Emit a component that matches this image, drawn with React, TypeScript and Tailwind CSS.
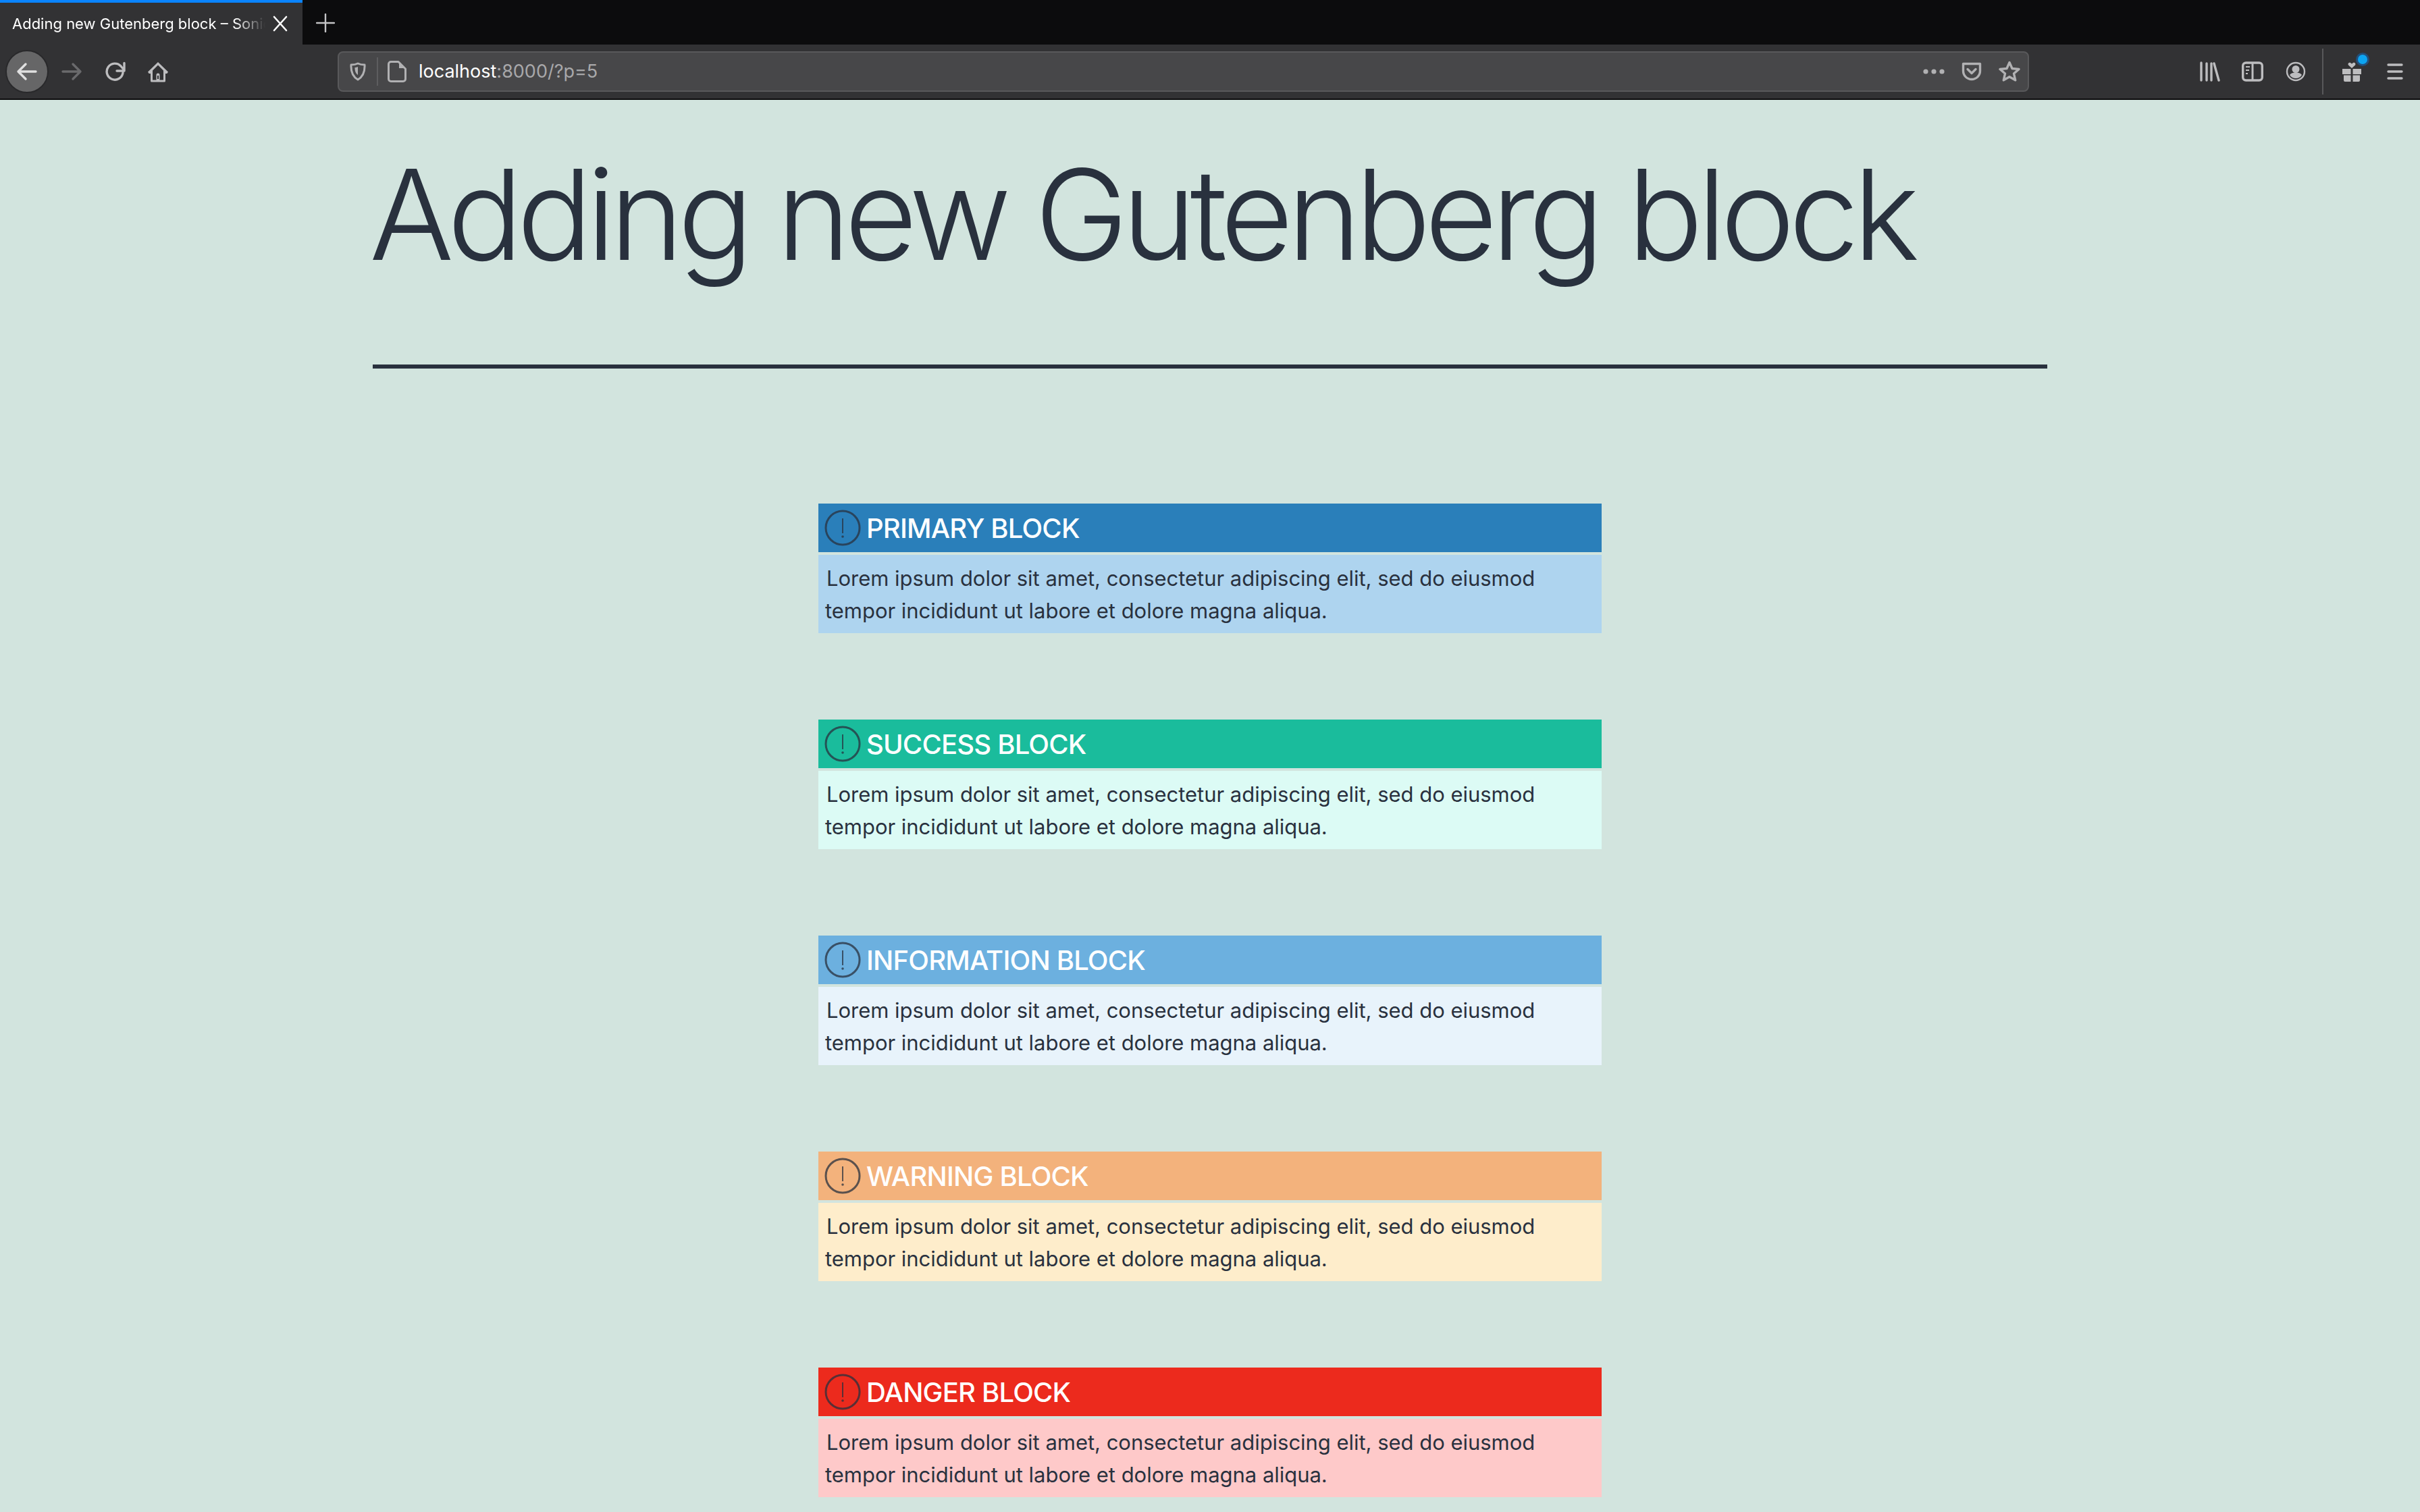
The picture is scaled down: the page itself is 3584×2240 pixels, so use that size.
import React from "react";

const sans = "font-['Inter','Liberation_Sans',sans-serif]";

function Ico({ children, className = "" }: { children: React.ReactNode; className?: string }) {
  return (
    <svg viewBox="0 0 32 32" fill="none" stroke="currentColor" strokeWidth="3.4" strokeLinecap="round" strokeLinejoin="round" className={`w-8 h-8 shrink-0 ${className}`}>
      {children}
    </svg>
  );
}

const blocks = [
  { title: "PRIMARY BLOCK", head: "bg-[#2a7fba]", body: "bg-[#aed4ef]" },
  { title: "SUCCESS BLOCK", head: "bg-[#1abc9c]", body: "bg-[#dcfbf5]" },
  { title: "INFORMATION BLOCK", head: "bg-[#6cb0df]", body: "bg-[#e8f3fb]" },
  { title: "WARNING BLOCK", head: "bg-[#f3b27c]", body: "bg-[#feedcb]" },
  { title: "DANGER BLOCK", head: "bg-[#ec2a1d]", body: "bg-[#fec9c9]" },
];

function Block({ title, head, body }: { title: string; head: string; body: string }) {
  return (
    <section className="w-[1160px] mx-auto mb-[128px]">
      <div className={`${head} h-[72px] flex items-center pl-[9px]`}>
        <svg viewBox="0 0 54 54" fill="none" className="w-[54px] h-[54px] shrink-0 text-[#29313e] opacity-75">
          <circle cx="27" cy="27" r="25" stroke="currentColor" strokeWidth="3" />
          <path d="M27 13v22" stroke="currentColor" strokeWidth="2" />
          <circle cx="27" cy="40" r="1.8" fill="currentColor" />
        </svg>
        <h2 className="ml-[8px] mt-[1px] text-[40px] leading-none font-medium text-white tracking-[-0.8px]">{title}</h2>
      </div>
      <div className={`${body} mt-1 h-[116px] pl-[10px] pt-[11px] text-[31px] leading-[48px] text-[#29313e] tracking-[-0.03px]`}>
        <p>
          <span className="ml-[2px]">Lorem ipsum dolor sit amet, consectetur adipiscing elit, sed do eiusmod</span>
          <br />
          tempor incididunt ut labore et dolore magna aliqua.
        </p>
      </div>
    </section>
  );
}

export default function App() {
  return (
    <div className={`${sans} w-[3584px] h-[2240px] overflow-hidden bg-[#d2e4de]`}>
      {/* tab strip */}
      <div className="h-[66px] bg-[#0c0c0d] flex">
        <div className="w-[448px] h-[66px] bg-[#323234] border-t-4 border-[#0a84ff] flex items-center pl-[18px] text-white">
          <span className="w-[375px] whitespace-nowrap overflow-hidden text-[22px] [mask-image:linear-gradient(to_right,black_88%,transparent)]">
            Adding new Gutenberg block – Sonic
          </span>
          <svg viewBox="0 0 24 24" className="w-6 h-6 ml-[10px] shrink-0" stroke="currentColor" strokeWidth="2.6" strokeLinecap="round">
            <path d="M3 2l18 20M21 2L3 22" />
          </svg>
        </div>
        <svg viewBox="0 0 28 28" className="w-7 h-7 ml-[20px] mt-[20px] text-[#c4c4c6]" stroke="currentColor" strokeWidth="2.4" strokeLinecap="round">
          <path d="M14 1v26M1 14h26" />
        </svg>
      </div>
      {/* toolbar */}
      <div className="h-[82px] bg-[#323234] border-b-2 border-[#0c0c0d] flex items-center pl-2 text-[#bdbdbf]">
        <div className="w-16 h-16 rounded-full bg-[#666667] border-2 border-[#29292b] flex items-center justify-center text-[#e0e0e0]">
          <Ico><path d="M3 16h26M14 5L3 16l11 11" /></Ico>
        </div>
        <Ico className="ml-[18px] text-[#6a6a6c]"><path d="M3 16h26M18 5l11 11-11 11" /></Ico>
        <Ico className="ml-[34px]"><path d="M26 18a12 12 0 1 1-3-10l5 6M28 3.500V15H17" /></Ico>
        <svg viewBox="0 0 32 32" className="w-8 h-8 ml-[30px] shrink-0">
          <path fillRule="evenodd" fill="currentColor" d="M16 2l15 14.500-1.600 2.500h-2.400v11a1.500 1.500 0 0 1-1.500 1.500h-19a1.500 1.500 0 0 1-1.500-1.500v-11h-2.400l-1.600-2.500zM16 6.500L8 14.500v14h5.500v-7.500a2.500 2.500 0 0 1 5 0v7.500h5.500v-14zM15 22v5h2v-5z" />
        </svg>
        {/* url bar */}
        <div className="ml-[250px] w-[2505px] h-[60px] rounded-lg bg-[#474749] border-2 border-[#59595b] flex items-center">
          <svg viewBox="0 0 24 28" className="w-6 h-7 ml-[16px] shrink-0 text-[#b1b1b3]" fill="none" stroke="currentColor" strokeWidth="3">
            <path d="M12 2c3 1.500 6 2 10 2 .5 9-1 17-10 22C3 21 1.500 13 2 4c4 0 7-.5 10-2z" strokeLinejoin="round" />
            <path d="M12 7c-1.500.7-3 1-4.500 1 0 4.500.8 8.500 4.500 11z" fill="currentColor" stroke="none" />
          </svg>
          <div className="w-[2px] h-[42px] bg-[#5d5d5f] ml-[16px]" />
          <svg viewBox="0 0 28 32" className="w-7 h-8 ml-[14px] shrink-0 text-[#b1b1b3]" fill="none" stroke="currentColor" strokeWidth="3" strokeLinejoin="round">
            <path d="M5 1.500h11l10.500 10.500v15a3.500 3.500 0 0 1-3.500 3.500H5A3.500 3.500 0 0 1 1.500 27V5A3.500 3.500 0 0 1 5 1.500z" />
            <path d="M17 2v9h9z" fill="currentColor" stroke="none" />
          </svg>
          <span className="ml-[18px] text-[27px] text-white">localhost<span className="text-[#a8a8aa]">:8000/?p=5</span></span>
          <div className="ml-auto flex items-center text-[#b1b1b3]">
            <svg viewBox="0 0 32 8" className="w-8 h-2 shrink-0" fill="currentColor">
              <circle cx="4" cy="4" r="3.600" /><circle cx="16" cy="4" r="3.600" /><circle cx="28" cy="4" r="3.600" />
            </svg>
            <Ico className="ml-[24px]"><path d="M3.500 4.500h25V15a12.500 12.500 0 0 1-25 0zM10 12.500l6 6 6-6" /></Ico>
            <svg viewBox="0 0 32 32" className="w-8 h-8 ml-[24px] mr-[11px] shrink-0" fill="none" stroke="currentColor" strokeWidth="3.400" strokeLinejoin="round">
              <path d="M16 2.500l4 9 10 1-7.500 6.500 2.200 9.800L16 23.800l-8.700 5 2.200-9.800L2 12.500l10-1z" />
            </svg>
          </div>
        </div>
        {/* right icons */}
        <svg viewBox="0 0 30 32" className="w-[30px] h-8 ml-[253px] shrink-0" stroke="currentColor" strokeWidth="3.400" strokeLinecap="round">
          <path d="M2 3v26M10 4v25M17 4v25M21 4l7 25" />
        </svg>
        <svg viewBox="0 0 32 32" className="w-8 h-8 ml-[32px] shrink-0" fill="none" stroke="currentColor">
          <rect x="1.700" y="3" width="28.600" height="26" rx="4.500" strokeWidth="3.400" />
          <path d="M16 3v26" strokeWidth="3" />
          <path d="M6 9h6M6 14h5M6 19h3" strokeWidth="2" />
        </svg>
        <svg viewBox="0 0 32 32" className="w-8 h-8 ml-[32px] shrink-0" fill="none">
          <circle cx="16" cy="16" r="13" stroke="currentColor" strokeWidth="2.400" />
          <circle cx="16" cy="12.500" r="5.500" fill="currentColor" />
          <path d="M7 21c2-3 5-3.500 9-3.500s7 .5 9 3.500c-2 3.500-5 5-9 5s-7-1.500-9-5z" fill="currentColor" />
        </svg>
        <div className="w-[2px] h-[68px] bg-[#58585a] ml-[23px]" />
        <div className="relative ml-[28px] w-[28px] h-[32px] shrink-0">
          <svg viewBox="0 0 28 32" className="w-[28px] h-8" fill="currentColor">
            <path d="M9 6.500c-1.500-2.500 1-4.500 3-3.500l2 1.500 2-1.500c2-1 4.500 1 3 3.500L14 11z" />
            <path d="M0 12h12.500v8H0zM15.500 12H28v8H15.500zM2 21.500h10.500V31H4a2 2 0 0 1-2-2zM15.500 21.500H26V29a2 2 0 0 1-2 2h-8.500z" />
          </svg>
          <span className="absolute -top-[9px] -right-[9px] w-[14px] h-[14px] rounded-full bg-[#0ca5f2] shadow-[0_0_0_3px_rgba(10,132,255,0.35)]" />
        </div>
        <svg viewBox="0 0 24 32" className="w-6 h-8 ml-[38px] shrink-0" stroke="currentColor" strokeWidth="3.400" strokeLinecap="round">
          <path d="M2 6h20M2 16h20M2 26h20" />
        </svg>
      </div>
      {/* page */}
      <main className="text-[#29313e]">
        <div className="w-[2480px] mx-auto">
          <h1 className="-ml-[5px] text-[186px] leading-[230px] font-light tracking-[-8.9px] pt-[55px] whitespace-nowrap">Adding new Gutenberg block</h1>
          <hr className="mt-[107px] h-[6px] border-0 bg-[#29313e]" />
        </div>
        <div className="pt-[200px]">
          {blocks.map((b) => (
            <Block key={b.title} {...b} />
          ))}
        </div>
      </main>
    </div>
  );
}
